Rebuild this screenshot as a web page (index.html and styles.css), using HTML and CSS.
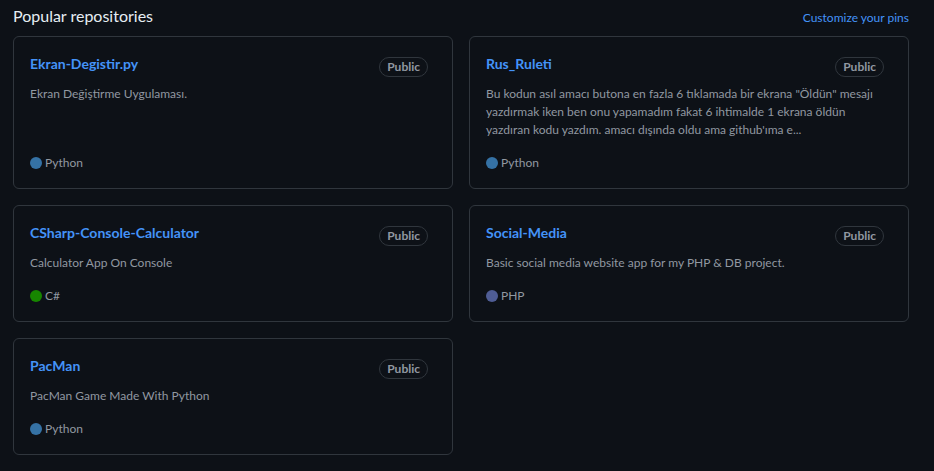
FILE: index.html
```html
<!DOCTYPE html>
<html lang="tr">
<head>
<meta charset="utf-8">
<link rel="stylesheet" href="styles.css">
</head>
<body>
<div class="pinned">
  <div class="head">
    <h2 class="head-title">Popular repositories</h2>
    <a class="head-link" href="#">Customize your pins</a>
  </div>
  <ol class="grid">
    <li class="card">
      <div class="card-top">
        <a class="repo" href="#">Ekran-Degistir.py</a>
        <span class="label">Public</span>
      </div>
      <p class="desc">Ekran Değiştirme Uygulaması.</p>
      <p class="lang"><span class="dot dot-py"></span>Python</p>
    </li>
    <li class="card">
      <div class="card-top">
        <a class="repo" href="#">Rus_Ruleti</a>
        <span class="label">Public</span>
      </div>
      <p class="desc">Bu kodun asıl amacı butona en fazla 6 tıklamada bir ekrana "Öldün" mesajı yazdırmak iken ben onu yapamadım fakat 6 ihtimalde 1 ekrana öldün yazdıran kodu yazdım. amacı dışında oldu ama github'ıma e...</p>
      <p class="lang"><span class="dot dot-py"></span>Python</p>
    </li>
    <li class="card">
      <div class="card-top">
        <a class="repo" href="#">CSharp-Console-Calculator</a>
        <span class="label">Public</span>
      </div>
      <p class="desc">Calculator App On Console</p>
      <p class="lang"><span class="dot dot-cs"></span>C#</p>
    </li>
    <li class="card">
      <div class="card-top">
        <a class="repo" href="#">Social-Media</a>
        <span class="label">Public</span>
      </div>
      <p class="desc">Basic social media website app for my PHP &amp; DB project.</p>
      <p class="lang"><span class="dot dot-php"></span>PHP</p>
    </li>
    <li class="card">
      <div class="card-top">
        <a class="repo" href="#">PacMan</a>
        <span class="label">Public</span>
      </div>
      <p class="desc">PacMan Game Made With Python</p>
      <p class="lang"><span class="dot dot-py"></span>Python</p>
    </li>
  </ol>
</div>
</body>
</html>
```

FILE: styles.css
```css
html, body {
  margin: 0;
  padding: 0;
  background: #0d1117;
}
body {
  font-family: Lato, "Noto Sans", sans-serif;
  color: #e6edf3;
}
.pinned {
  width: 896px;
  padding: 4px 0 0 13px;
}
.head {
  display: flex;
  justify-content: space-between;
  align-items: baseline;
  margin-bottom: 8px;
}
.head-title {
  margin: 0;
  font-size: 16px;
  font-weight: 400;
  line-height: 24px;
  color: #e6edf3;
}
.head-link {
  font-size: 12px;
  color: #4493f8;
  text-decoration: none;
}
.grid {
  list-style: none;
  margin: 0;
  padding: 0;
  display: grid;
  grid-template-columns: 440px 440px;
  gap: 16px;
}
.card {
  border: 1px solid #30363d;
  border-radius: 6px;
  padding: 16px;
  display: flex;
  flex-direction: column;
}
.card-top {
  display: flex;
  justify-content: space-between;
  align-items: flex-start;
  height: 24px;
}
.repo {
  font-size: 14px;
  font-weight: 700;
  line-height: 21px;
  color: #4493f8;
  text-decoration: none;
}
.label {
  margin: 4px 8px 0 0;
  box-sizing: border-box;
  height: 20px;
  padding: 0 7px;
  border: 1px solid #30363d;
  border-radius: 2em;
  font-size: 12px;
  font-weight: 700;
  line-height: 18px;
  color: #9198a1;
}
.desc {
  margin: 8px 0 0;
  max-width: 398px;
  font-size: 12px;
  line-height: 18px;
  color: #9198a1;
  flex: 1;
}
.lang {
  margin: 15px 0 0;
  font-size: 12px;
  line-height: 18px;
  color: #9198a1;
  display: flex;
  align-items: center;
}
.dot {
  width: 12px;
  height: 12px;
  border-radius: 50%;
  margin-right: 3px;
  flex: none;
}
.dot-py { background: #3572a5; }
.dot-cs { background: #178600; }
.dot-php { background: #4f5d95; }
```
